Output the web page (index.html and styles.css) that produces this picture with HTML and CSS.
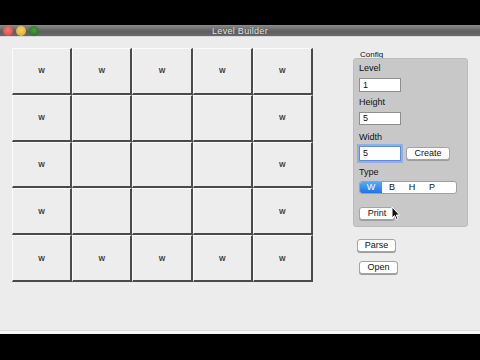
FILE: index.html
```html
<!DOCTYPE html>
<html>
<head>
<meta charset="utf-8">
<link rel="stylesheet" href="styles.css">
</head>
<body>
<div class="screen">
  <div class="topblack"></div>
  <div class="window">
    <div class="titlebar">
      <div class="lights">
        <span class="light red"></span>
        <span class="light yellow"></span>
        <span class="light green"></span>
      </div>
      <div class="title">Level Builder</div>
    </div>
    <div class="content">
      <div class="board">
        <div class="cell">W</div><div class="cell">W</div><div class="cell">W</div><div class="cell">W</div><div class="cell">W</div>
        <div class="cell">W</div><div class="cell"></div><div class="cell"></div><div class="cell"></div><div class="cell">W</div>
        <div class="cell">W</div><div class="cell"></div><div class="cell"></div><div class="cell"></div><div class="cell">W</div>
        <div class="cell">W</div><div class="cell"></div><div class="cell"></div><div class="cell"></div><div class="cell">W</div>
        <div class="cell">W</div><div class="cell">W</div><div class="cell">W</div><div class="cell">W</div><div class="cell">W</div>
      </div>
      <div class="side">
        <div class="group-title">Config</div>
        <div class="panel">
          <div class="label">Level</div>
          <div class="field f1">1</div>
          <div class="label l2">Height</div>
          <div class="field f2">5</div>
          <div class="label l3">Width</div>
          <div class="row">
            <div class="field f3 focus">5</div>
            <div class="btn create">Create</div>
          </div>
          <div class="label l4">Type</div>
          <div class="seg">
            <div class="seg-item sel">W</div>
            <div class="seg-item">B</div>
            <div class="seg-item">H</div>
            <div class="seg-item">P</div>
          </div>
          <div class="btn print">Print</div>
          <svg class="cursor" width="10" height="15" viewBox="0 0 10 15">
            <path d="M1 1 L1 12 L3.6 9.6 L5.4 13.6 L7 12.9 L5.3 9 L8.6 9 Z" fill="#111" stroke="#fff" stroke-width="1"/>
          </svg>
        </div>
        <div class="btn parse">Parse</div>
        <div class="btn open">Open</div>
      </div>
    </div>
    <div class="bottomline"></div>
  </div>
</div>
</body>
</html>
```

FILE: styles.css
```css
* { box-sizing: border-box; }
html, body { margin: 0; padding: 0; }
body {
  background: #000;
  width: 480px;
  height: 360px;
  overflow: hidden;
  font-family: "Liberation Sans", Arial, sans-serif;
}
.screen { width: 480px; height: 360px; }
.topblack { height: 25px; background: #000; }
.window { height: 309px; background: #ececec; display: flex; flex-direction: column; }
.titlebar {
  height: 12px;
  position: relative;
  background: linear-gradient(#8c8c8c, #5e5e5e 60%, #6a6a6a);
  border-bottom: 1px solid #d8d8d8;
  display: flex;
  align-items: center;
}
.lights { display: flex; gap: 3px; padding-left: 3px; }
.light { width: 10px; height: 10px; border-radius: 50%; display: block; }
.red { background: radial-gradient(circle at 50% 40%, #f07a78, #d2453f); }
.yellow { background: radial-gradient(circle at 50% 40%, #f2d36a, #d6a526); }
.green { background: radial-gradient(circle at 50% 40%, #4f9a48, #24641f); }
.title {
  position: absolute;
  left: 0; right: 0; top: 0;
  text-align: center;
  font-size: 9px;
  line-height: 12px;
  color: #e8e8e8;
  text-shadow: 0 0 1px #333;
  letter-spacing: 0.3px;
}
.content { flex: 1; display: flex; padding: 11px 0 0 12px; }
.board {
  width: 301px;
  height: 234px;
  display: grid;
  grid-template-columns: repeat(5, 1fr);
  grid-template-rows: repeat(5, 1fr);
}
.cell {
  border-left: 1px solid #fbfbfb;
  border-top: 1px solid #fbfbfb;
  border-right: 2px solid #4a4a4a;
  border-bottom: 2px solid #4a4a4a;
  background: #ededed;
  display: flex;
  align-items: center;
  justify-content: center;
  font-size: 7px;
  font-weight: bold;
  color: #3c3c3c;
}
.side { margin-left: 40px; width: 116px; }
.group-title { font-size: 8px; line-height: 10px; color: #111; padding-left: 7px; margin-top: 2px; }
.panel {
  position: relative;
  margin-top: -2px;
  width: 115px;
  height: 169px;
  background: #c8c8c8;
  border: 1px solid #bcbcbc;
  border-radius: 3px;
  padding: 4px 0 0 5px;
}
.label { font-size: 9px; line-height: 10px; color: #111; }
.field {
  width: 42px;
  height: 14px;
  background: #fff;
  border: 1px solid #8e8e8e;
  font-size: 9px;
  line-height: 12px;
  padding-left: 3px;
  color: #111;
}
.f1 { margin-top: 5px; }
.l2 { margin-top: 5px; }
.f2 { margin-top: 5px; height: 13px; line-height: 11px; }
.l3 { margin-top: 7px; }
.row { display: flex; align-items: center; gap: 5px; margin-top: 4px; }
.f3 { height: 15px; line-height: 13px; }
.focus { border: 1px solid #5d8fd6; box-shadow: 0 0 0 2px rgba(120, 165, 235, 0.7); }
.btn {
  background: #fff;
  border: 1px solid #a4a4a4;
  border-radius: 3px;
  box-shadow: 0 1px 0 #9c9c9c;
  font-size: 9px;
  line-height: 11px;
  text-align: center;
  color: #111;
}
.create { width: 44px; height: 13px; }
.l4 { margin-top: 6px; }
.seg {
  margin-top: 4px;
  width: 98px;
  height: 13px;
  background: #fff;
  border: 1px solid #a0a0a0;
  border-radius: 3px;
  display: flex;
  overflow: hidden;
}
.seg-item { width: 20px; font-size: 9px; line-height: 11px; text-align: center; color: #111; }
.seg-item.sel {
  width: 22px;
  background: linear-gradient(#5aa8f8, #1f74e6);
  color: #fff;
}
.print { width: 36px; height: 13px; margin-top: 13px; }
.cursor { position: absolute; left: 37px; top: 147px; }
.parse { width: 39px; height: 13px; margin-top: 12px; margin-left: 4px; }
.open { width: 39px; height: 13px; margin-top: 9px; margin-left: 6px; }
.bottomline { height: 4px; background: #f6f6f6; border-top: 1px solid #dcdcdc; }
```
